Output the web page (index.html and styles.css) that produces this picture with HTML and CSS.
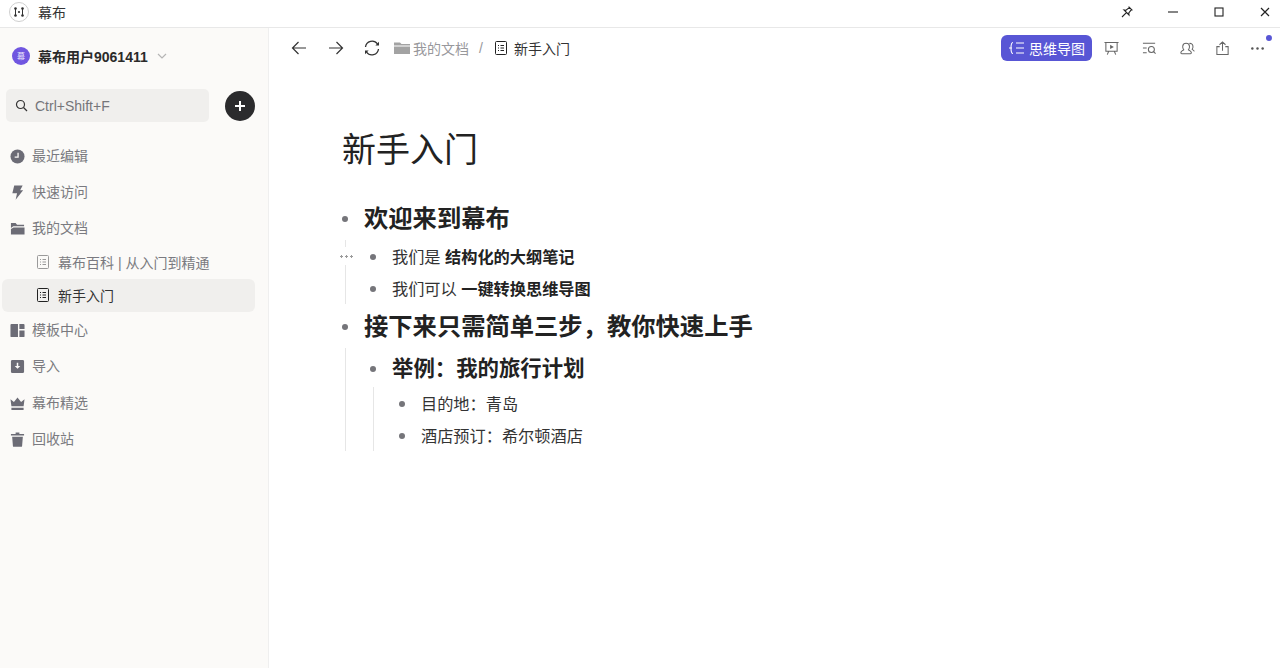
FILE: index.html
```html
<!DOCTYPE html>
<html lang="zh">
<head>
  <meta charset="UTF-8" />
  <title>幕布</title>
  <link rel="stylesheet" href="styles.css">
</head>
<body>

<header class="titlebar">
  <svg class="app-logo" width="20" height="20" viewBox="0 0 20 20">
    <circle cx="10" cy="10" r="9.5" fill="#fff" stroke="#cfcfcf"/>
    <g fill="#333">
      <circle cx="6.500" cy="6.500" r="1.300"/><circle cx="13.500" cy="6.500" r="1.300"/>
      <circle cx="6.500" cy="13.500" r="1.300"/><circle cx="13.500" cy="13.500" r="1.300"/>
      <circle cx="10" cy="10" r="1.100"/>
    </g>
    <path d="M6.500 7v6M13.500 7v6" stroke="#333" stroke-width="1"/>
  </svg>
  <span class="app-name">幕布</span>
  <div class="win-btns">
    <svg class="win-btn" viewBox="0 0 14 14" fill="none" stroke="#222" stroke-width="1.100"><path d="M8.600 1.600l3.800 3.800M9.600 2.400L6 5.200 4 5l5 5-.2-2 2.800-3.600M6.400 7.600L2 12"/></svg>
    <svg class="win-btn" viewBox="0 0 14 14" fill="none" stroke="#222" stroke-width="1.100"><path d="M2 7h10"/></svg>
    <svg class="win-btn" viewBox="0 0 14 14" fill="none" stroke="#222" stroke-width="1.100"><rect x="3" y="3" width="8" height="8"/></svg>
    <svg class="win-btn" viewBox="0 0 14 14" fill="none" stroke="#222" stroke-width="1.200"><path d="M3 3l8 8M11 3l-8 8"/></svg>
  </div>
</header>

<div class="app">
  <aside class="sidebar">
    <div class="user">
      <span class="avatar">幕</span>
      <span class="user-name">幕布用户9061411</span>
      <svg width="10" height="6" viewBox="0 0 10 6" fill="none" stroke="#b5b5b5" stroke-width="1.200"><path d="M1 1l4 4 4-4"/></svg>
    </div>
    <div class="search-row">
      <div class="search">
        <svg width="13" height="13" viewBox="0 0 13 13" fill="none" stroke="#333" stroke-width="1.200"><circle cx="5.500" cy="5.500" r="4"/><path d="M8.500 8.500l3.500 3.500"/></svg>
        <span>Ctrl+Shift+F</span>
      </div>
      <button class="add-btn" type="button">
        <svg width="12" height="12" viewBox="0 0 12 12" stroke="#fff" stroke-width="2"><path d="M6 1v10M1 6h10"/></svg>
      </button>
    </div>
    <nav class="nav">
      <div class="nav-item">
        <svg class="nav-icon" viewBox="0 0 16 16"><circle cx="8" cy="8" r="7.500"/><path d="M8.600 4v4.600H5" fill="none" stroke="#fbfaf8" stroke-width="1.400"/></svg>
        最近编辑
      </div>
      <div class="nav-item">
        <svg class="nav-icon" viewBox="0 0 16 16"><path d="M4.500 .5h9L10.800 5.500H14L6 15.800l1.500-7H2.500z"/></svg>
        快速访问
      </div>
      <div class="nav-item">
        <svg class="nav-icon" viewBox="0 0 16 16"><path d="M1 2h5l1.500 2H15v1.500H3.500L1 7.500zM1 14.500V8.600L3.800 7H15.500v7.500z"/></svg>
        我的文档
      </div>
      <div class="doc-item">
        <svg class="doc-icon" viewBox="0 0 12 14" fill="none" stroke="#9a9a9a"><rect x=".5" y=".5" width="11" height="13" rx="1"/><path d="M3 4.500h1M5.500 4.500H9M3 7h1M5.500 7H9M3 9.500h1M5.500 9.500H9"/></svg>
        幕布百科 | 从入门到精通
      </div>
      <div class="doc-item active">
        <svg class="doc-icon" viewBox="0 0 12 14" fill="none" stroke="#222"><rect x=".5" y=".5" width="11" height="13" rx="1"/><path d="M3 4.500h1M5.500 4.500H9M3 7h1M5.500 7H9M3 9.500h1M5.500 9.500H9"/></svg>
        新手入门
      </div>
      <div class="nav-item">
        <svg class="nav-icon" viewBox="0 0 16 16"><path d="M1.500 1H8.500v14H1.500a1 1 0 0 1-1-1V2a1 1 0 0 1 1-1zM10 1h4.500a1 1 0 0 1 1 1V6.500H10zM10 8h5.500v6a1 1 0 0 1-1 1H10z"/></svg>
        模板中心
      </div>
      <div class="nav-item">
        <svg class="nav-icon" viewBox="0 0 16 16"><path fill-rule="evenodd" d="M2.500 1h11A1.500 1.500 0 0 1 15 2.500v11a1.500 1.500 0 0 1-1.500 1.500h-11A1.500 1.500 0 0 1 1 13.500v-11A1.500 1.500 0 0 1 2.500 1zM7.200 4v3.500H5L8 10.500l3-3H8.800V4z"/></svg>
        导入
      </div>
      <div class="nav-item crown">
        <svg class="nav-icon" viewBox="0 0 16 16"><path d="M.5 3.500l3.700 3L8 1.500l3.800 5 3.700-3L14.500 11h-13zM1.500 12.500h13V15h-13z"/></svg>
        幕布精选
      </div>
      <div class="nav-item">
        <svg class="nav-icon" viewBox="0 0 16 16"><path d="M6 .5h4V2h5v1.800H1V2h5zM2.300 5h11.400l-.8 9.800a1 1 0 0 1-1 .9H4.100a1 1 0 0 1-1-.9z"/></svg>
        回收站
      </div>
    </nav>
  </aside>

  <main class="main">
    <div class="toolbar">
      <div class="crumbs">
        <svg class="tool-icon arrow" viewBox="0 0 16 16" fill="none" stroke="#333" stroke-width="1.200"><path d="M15 8H1.500M7.500 2l-6 6 6 6"/></svg>
        <svg class="tool-icon arrow" viewBox="0 0 16 16" fill="none" stroke="#333" stroke-width="1.200"><path d="M1 8h13.500M8.500 2l6 6-6 6"/></svg>
        <svg class="tool-icon refresh" viewBox="0 0 16 16" fill="none" stroke="#333" stroke-width="1.300"><path d="M1.500 7a6.600 6.600 0 0 1 12-3M14.500 9a6.600 6.600 0 0 1-12 3"/><path d="M15 1.800v3.600h-3.600z" fill="#333" stroke="none"/><path d="M1 14.200v-3.600h3.600z" fill="#333" stroke="none"/></svg>
        <svg class="crumb-folder" viewBox="0 0 16 14"><path d="M0 1.500h6l1.500 1.500H16v1.500H0zM0 5.500h16V13H0z" fill="#a3a3a3"/></svg>
        <span class="crumb-muted">我的文档</span>
        <span class="crumb-sep">/</span>
        <svg class="crumb-doc" viewBox="0 0 12 14" fill="none" stroke="#222"><rect x=".5" y=".5" width="11" height="13" rx="1"/><path d="M3 4.500h1M5.500 4.500H9M3 7h1M5.500 7H9M3 9.500h1M5.500 9.500H9"/></svg>
        <span class="crumb-current">新手入门</span>
      </div>
      <div class="actions">
        <button class="mindmap-btn" type="button">
          <svg width="16" height="14" viewBox="0 0 16 14" fill="none" stroke="#fff" stroke-width="1.100"><path d="M4 1.500C2 1.500 2 4 2 7s0 5.500 2 5.500M0 7h3M7 2h8M7 7h8M7 12h8"/></svg>
          思维导图
        </button>
        <svg class="action-icon wide" viewBox="0 0 16 16" fill="none" stroke="#666" stroke-width="1.100"><path d="M.5 1.500h15M2 1.500v9.500h12V1.500M5 11l-1.500 3.500M11 11l1.500 3.500"/><path d="M6.500 4l4 2.300-4 2.300z" fill="#666" stroke="none"/></svg>
        <svg class="action-icon wide" viewBox="0 0 16 16" fill="none" stroke="#666" stroke-width="1.100"><path d="M1 2.500h13M1 7.500h4M1 12.500h4"/><circle cx="10" cy="9" r="3.200"/><path d="M12.300 11.300l2.200 2.200"/></svg>
        <svg class="action-icon" viewBox="0 0 16 16" fill="none" stroke="#666" stroke-width="1.100"><path d="M6.500 13.500H2c-1 0-1.200-.8-1-1.500.4-1.400 2.200-2 3-2.600C3 8 2.700 6.800 2.900 5.500 3.200 3.500 4.700 2.500 6.500 2.500s3.300 1 3.600 3c.2 1.300-.1 2.500-1.100 3.900.8.600 2.600 1.200 3 2.600.2.700 0 1.500-1 1.500z"/><path d="M10 2.600c1.800-.3 3.500.7 3.800 2.800.2 1.300-.1 2.400-.8 3.500 1 .6 2 1.200 2.300 2.200"/></svg>
        <svg class="action-icon" viewBox="0 0 16 16" fill="none" stroke="#666" stroke-width="1.100"><path d="M5 6H2v8.500h12V6h-3M8 10.500V1M4.800 4L8 1l3.200 3"/></svg>
        <span class="more">
          <svg class="action-icon" viewBox="0 0 16 16" fill="#555"><circle cx="2.500" cy="8" r="1.300"/><circle cx="8" cy="8" r="1.300"/><circle cx="13.500" cy="8" r="1.300"/></svg>
          <span class="badge"></span>
        </span>
      </div>
    </div>

    <article class="doc">
      <h1 class="doc-title">新手入门</h1>

      <div class="node">
        <div class="row big"><span class="dot"></span>欢迎来到幕布</div>
        <div class="children first-children">
          <span class="handle"></span>
          <div class="row"><span class="dot"></span>我们是&nbsp;<b>结构化的大纲笔记</b></div>
          <div class="row"><span class="dot"></span>我们可以&nbsp;<b>一键转换思维导图</b></div>
        </div>
      </div>

      <div class="node">
        <div class="row big"><span class="dot"></span>接下来只需简单三步，教你快速上手</div>
        <div class="children">
          <div class="node">
            <div class="row big nested"><span class="dot"></span>举例：我的旅行计划</div>
            <div class="children">
              <div class="row"><span class="dot"></span>目的地：青岛</div>
              <div class="row"><span class="dot"></span>酒店预订：希尔顿酒店</div>
            </div>
          </div>
        </div>
      </div>
    </article>
  </main>
</div>

</body>
</html>
```

FILE: styles.css
```css
* {
  box-sizing: border-box;
}

body {
  margin: 0;
  height: 668px;
  overflow: hidden;
  font-family: "Liberation Sans", "Noto Sans CJK SC", sans-serif;
  color: #222;
  background: #fff;
}

.titlebar {
  display: flex;
  align-items: center;
  height: 28px;
  padding: 0 0 3px 9px;
  border-bottom: 1px solid #e8e8e8;
}

.app-name {
  margin-left: 9px;
  font-size: 14px;
  color: #333;
}

.win-btns {
  margin-left: auto;
  display: flex;
  align-items: center;
  gap: 32px;
  padding-right: 8px;
}

.win-btn {
  width: 14px;
  height: 14px;
}

.app {
  display: flex;
  height: 640px;
}

/* sidebar */
.sidebar {
  width: 269px;
  flex-shrink: 0;
  background: #fbfaf8;
  border-right: 1px solid #efefef;
}

.user {
  display: flex;
  align-items: center;
  height: 55px;
  padding-left: 12px;
}

.avatar {
  display: flex;
  align-items: center;
  justify-content: center;
  width: 18px;
  height: 18px;
  border-radius: 50%;
  background: #7056e0;
  color: #e8e4fb;
  font-size: 8px;
}

.user-name {
  margin: 0 9px 0 8px;
  font-size: 14px;
  font-weight: bold;
  color: #2a2a2a;
}

.search-row {
  display: flex;
  align-items: center;
  padding-left: 6px;
  margin-top: 6px;
}

.search {
  display: flex;
  align-items: center;
  gap: 7px;
  width: 203px;
  height: 33px;
  padding-left: 9px;
  border-radius: 5px;
  background: #f0efed;
  font-size: 14px;
  color: #75757a;
}

.add-btn {
  display: flex;
  align-items: center;
  justify-content: center;
  width: 30px;
  height: 30px;
  margin-left: 16px;
  padding: 0;
  border: none;
  border-radius: 50%;
  background: #2b2b2d;
}

.nav {
  margin-top: 15px;
}

.nav-item {
  display: flex;
  align-items: center;
  gap: 7px;
  height: 36px;
  padding-left: 10px;
  font-size: 14px;
  color: #7a7a80;
}

.nav-item.crown {
  margin-top: 1px;
}

.nav-icon {
  width: 15px;
  height: 15px;
  margin-top: 2px;
  fill: #6c6c76;
}

.doc-item {
  display: flex;
  align-items: center;
  gap: 9px;
  width: 253px;
  height: 32px;
  margin: 1px 0 0 2px;
  padding-left: 35px;
  border-radius: 6px;
  font-size: 14px;
  color: #7a7a80;
}

.doc-item.active {
  height: 33px;
  margin-bottom: -1px;
  padding-bottom: 2px;
  background: #f0efed;
  color: #333;
}

.doc-icon {
  width: 12px;
  height: 14px;
}

/* main */
.main {
  flex: 1;
}

.toolbar {
  display: flex;
  align-items: center;
  justify-content: space-between;
  height: 40px;
  padding: 0 15px 0 22px;
}

.crumbs {
  display: flex;
  align-items: center;
}

.tool-icon {
  width: 16px;
  height: 16px;
}

.arrow {
  margin-right: 20.5px;
}

.refresh {
  margin-right: 14px;
}

.crumb-folder {
  width: 16px;
  height: 14px;
  margin-right: 3px;
}

.crumb-muted {
  font-size: 14px;
  color: #98989c;
}

.crumb-sep {
  margin: 0 12px 0 10px;
  font-size: 14px;
  color: #98989c;
}

.crumb-doc {
  width: 12px;
  height: 14px;
  margin-right: 7px;
}

.crumb-current {
  font-size: 14px;
  color: #333;
}

.actions {
  display: flex;
  align-items: center;
  gap: 20px;
}

.mindmap-btn {
  display: flex;
  align-items: center;
  gap: 4px;
  width: 91px;
  height: 26px;
  margin-right: -8px;
  padding: 0 0 0 8px;
  border: none;
  border-radius: 6px;
  background: #5856d5;
  color: #fff;
  font-family: inherit;
  font-size: 14px;
}

.action-icon {
  display: block;
  width: 15px;
  height: 15px;
}

.action-icon.wide {
  margin-right: 3px;
}

.more {
  position: relative;
}

.badge {
  position: absolute;
  top: -6px;
  right: -7px;
  width: 6px;
  height: 6px;
  border-radius: 50%;
  background: #5856d5;
}

/* outline */
.doc {
  padding: 57px 0 0 73px;
}

.doc-title {
  margin: 0 0 21px;
  height: 50px;
  font-size: 34px;
  line-height: 50px;
  font-weight: normal;
  color: #222;
}

.row {
  display: flex;
  align-items: center;
  height: 32px;
  padding-left: 22px;
  position: relative;
  font-size: 16.2px;
  color: #333;
  white-space: nowrap;
}

.row b {
  color: #222;
}

.row.big {
  height: 40px;
  font-size: 24.3px;
  font-weight: bold;
  color: #222;
}

.row.nested {
  height: 36px;
  font-size: 21.4px;
}

.dot {
  position: absolute;
  left: 0;
  top: 50%;
  width: 6px;
  height: 6px;
  margin-top: -2px;
  border-radius: 50%;
  background: #75757a;
}

.big .dot {
  margin-top: 0;
}

.children {
  position: relative;
  margin-left: 3px;
  padding-left: 24px;
  border-left: 1px solid #e6e6e6;
}

.node > .children {
  margin-top: 4px;
}

.node .node > .children {
  margin: 3px 0 0 3px;
  padding-left: 25px;
}

.handle {
  position: absolute;
  left: -8px;
  top: 7px;
  width: 16px;
  height: 18px;
  background: #fff radial-gradient(circle, #9a9a9a 1px, transparent 1.2px) 1px center / 5px 5px repeat-x;
}
```
